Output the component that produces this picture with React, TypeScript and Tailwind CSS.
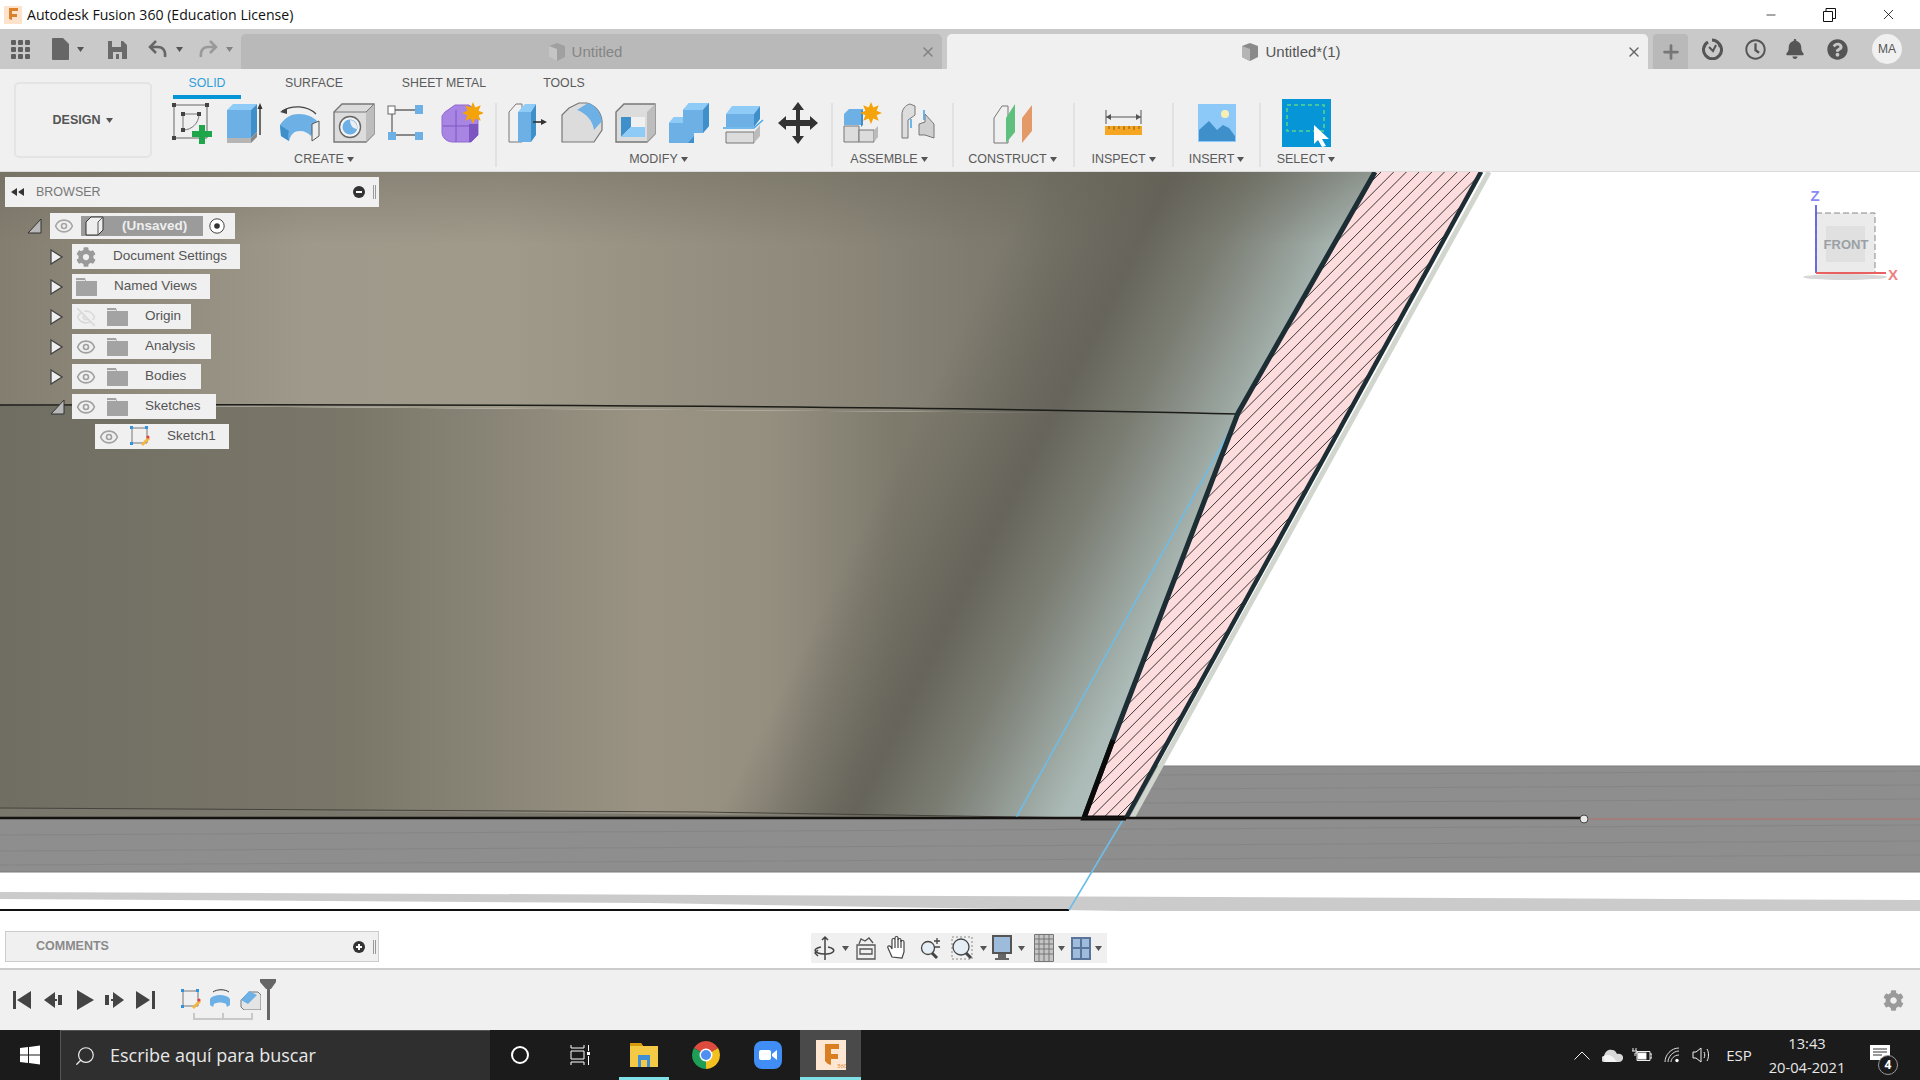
import { Eye, EyeOff, Minus, X, Plus, Search } from "lucide-react";
import { FaBell, FaCog, FaQuestionCircle, FaRegClock } from "react-icons/fa";

const B = "#6cb0e6";
const BD = "#3f8fcb";
const BL = "#8fcbf7";
const G = "#dcdcdc";
const GD = "#b5b5b5";
const L = "#777";

const Caret = ({ className = "" }: { className?: string }) => (
  <svg width="7" height="5" viewBox="0 0 7 5" className={className}>
    <path d="M0 0h7L3.5 5z" fill="#555" />
  </svg>
);

const Folder = () => (
  <svg width="21" height="18" viewBox="0 0 21 18">
    <path d="M0 0h9l1 3h11v15H0z" fill="#a3a3a3" />
    <path d="M0 2h9v1H0z" fill="#e6e6e6" />
  </svg>
);

const Burst = ({ x, y, r = 9 }: { x: number; y: number; r?: number }) => {
  const pts = Array.from({ length: 16 }, (_, i) => {
    const rad = i % 2 ? r * 0.55 : r;
    const a = (i * Math.PI) / 8;
    return `${x + rad * Math.cos(a)},${y + rad * Math.sin(a)}`;
  }).join(" ");
  return <polygon points={pts} fill="#f5a30a" />;
};

const Ico = ({ children, w = 42, h = 42 }: { children: React.ReactNode; w?: number; h?: number }) => (
  <svg width={w} height={h} viewBox={`0 0 ${w} ${h}`}>
    {children}
  </svg>
);

const SketchIco = () => (
  <Ico>
    <path d="M3 3h33v33H3z" fill="none" stroke="#666" />
    <path d="M12 12h16M12 12v16M28 12c0 9-7 16-16 16" fill="none" stroke="#777" />
    {[[1, 1], [34, 1], [1, 34], [10, 10], [26, 10], [10, 26]].map(([x, y]) => (
      <rect key={`${x}-${y}`} x={x} y={y} width="4" height="4" fill="#444" />
    ))}
    <path d="M28 23h6v6h7v6h-7v7h-6v-7h-7v-6h7z" fill="#1fa64a" />
  </Ico>
);

const ExtrudeIco = () => (
  <Ico>
    <path d="M2 36V8h24v28z" fill={B} />
    <path d="M2 8l6-6h24L26 8z" fill={BL} />
    <path d="M26 8l6-6v28l-6 6z" fill={BD} />
    <path d="M2 36h24v5H2z" fill={GD} />
    <path d="M26 36l6-6v5l-6 6z" fill="#888" />
    <path d="M35 33V4" stroke="#333" strokeWidth="1.4" />
    <path d="M32.5 7L35 1l2.5 6z" fill="#333" />
  </Ico>
);

const RevolveIco = () => (
  <Ico>
    <path d="M3 9C13 3 28 3 37 12" fill="none" stroke="#444" strokeWidth="1.3" />
    <path d="M1 10l7-4 0 6z" fill="#444" />
    <path d="M1 23C6 15 13 12 20 12c8 0 14 3 18 7l-6 15c-3-3-6-5-11-5-6 0-9 3-11 10l-8-5z" fill={B} />
    <path d="M1 23l9 6c-1 3-1 6 0 10l-8-5z" fill={BD} />
    <path d="M33 22l7-3v15l-7 5z" fill="#eee" stroke="#555" />
  </Ico>
);

const HoleIco = () => (
  <Ico>
    <path d="M1 10l8-8h32v30l-8 8H1z" fill={G} stroke={L} strokeWidth="1.4" />
    <path d="M33 40V10l8-8v30z" fill="#bdbdbd" />
    <path d="M1 10h32l8-8" fill="none" stroke={L} />
    <circle cx="17" cy="25" r="10.5" fill="#f3f3f3" stroke="#666" strokeWidth="1.4" />
    <circle cx="17" cy="25" r="7.5" fill={B} />
    <path d="M17 18a7.5 7.5 0 0 1 7 9c-4 0-7-4-7-9z" fill="#eee" />
  </Ico>
);

const PatternIco = () => (
  <Ico>
    <path d="M8 8h20M5 12v18M8 33h20" stroke="#666" strokeWidth="1.3" />
    <rect x="1" y="4" width="7" height="8" fill="#fff" stroke="#666" />
    <rect x="28" y="3" width="8" height="9" fill={B} />
    <rect x="1" y="30" width="8" height="8" fill={B} />
    <rect x="28" y="30" width="8" height="8" fill={B} />
  </Ico>
);

const FormIco = () => (
  <Ico>
    <path d="M4 10L14 3h14l9 8v22l-7 7H12C6 40 1 36 1 30V14z" fill="#a885e3" stroke="#8f68d2" />
    <path d="M28 22h9v11l-7 7h-2z" fill="#7d55c0" />
    <path d="M2 24h26M15 8v32" stroke="#7d55c0" />
    <Burst x={32} y={11} r={11} />
  </Ico>
);

const PressIco = () => (
  <Ico w={40}>
    <path d="M1 10l7-8h6v38H1z" fill="#f1f1f1" stroke={L} />
    <path d="M10 10h13v30H10z" fill={B} />
    <path d="M10 10l7-8h11l-5 8z" fill={BL} />
    <path d="M23 10l5-8v31l-5 7z" fill={BD} />
    <path d="M25 20h10" stroke="#333" strokeWidth="1.6" />
    <path d="M33 17l6 3-6 3z" fill="#333" />
  </Ico>
);

const FilletIco = () => (
  <Ico>
    <path d="M1 13l7-7 10-5h8c8 2 14 9 15 18v9l-8 12H1z" fill={G} stroke={L} strokeWidth="1.2" />
    <path d="M16 8l11-7c7 2 13 9 14 18l-8 9c-1-9-8-17-17-20z" fill={B} />
  </Ico>
);

const ShellIco = () => (
  <Ico>
    <path d="M1 10l8-8h31v30l-8 8H1z" fill={G} stroke={L} strokeWidth="1.4" />
    <path d="M32 40V10l8-8v30z" fill="#bdbdbd" />
    <path d="M6 15h24v20H6z" fill="#f0f0f0" />
    <path d="M6 15h10v10l-10 10z" fill={BD} />
    <path d="M6 35l10-10h14v10z" fill={BL} />
  </Ico>
);

const CombineIco = () => (
  <Ico>
    <path d="M14 8l6-7h20v23l-6 7H25v10H0V21l5-6h9z" fill={B} />
    <path d="M14 8l6-7h20l-6 7z" fill={BL} />
    <path d="M34 8l6-7v23l-6 7z" fill={BD} />
    <path d="M0 21l5-6h9v6z" fill={BL} />
    <path d="M25 31v10l-6-0l6-7z" fill={BD} />
  </Ico>
);

const SplitIco = () => (
  <Ico>
    <path d="M3 12h28v13H3z" fill={B} />
    <path d="M3 12l6-8h28l-6 8z" fill={BL} />
    <path d="M31 12l6-8v13l-6 8z" fill={BD} />
    <path d="M3 30h28v11H3z" fill={G} stroke={L} />
    <path d="M31 41V30l6-7v11z" fill="#bbb" />
    <path d="M0 26h31l9-8" fill="none" stroke="#4aa8ea" strokeWidth="1.6" />
  </Ico>
);

const MoveIco = () => (
  <Ico>
    <path d="M21 0l6 8h-4v10h10v-4l8 7-8 7v-4H23v10h4l-6 8-6-8h4V24H9v4l-8-7 8-7v4h10V8h-4z" fill="#333" />
  </Ico>
);

const NewCompIco = () => (
  <Ico>
    <path d="M1 12l5-5h14v16H1z" fill={B} />
    <path d="M20 7v16l-2 2V9z" fill={BD} />
    <path d="M1 24h15v16H1z" fill={G} stroke={L} />
    <path d="M16 28h15v12H16z" fill={G} stroke={L} />
    <path d="M31 40V28l4-4v11z" fill="#bbb" />
    <Burst x={28} y={11} r={11} />
  </Ico>
);

const JointIco = () => (
  <Ico w={36}>
    <path d="M2 36V12c0-4 3-9 8-10l5 2v9l-7 5v18z" fill="#ddd" stroke={L} />
    <path d="M19 22l6-2v-8l9 10v14l-9-3h-6z" fill="#cfcfcf" stroke={L} />
    <path d="M11 17v9M24 8v10" stroke="#4aa8ea" strokeWidth="1.6" />
  </Ico>
);

const PlaneIco = () => (
  <Ico w={44}>
    <path d="M2 16l8-12h6v37H2z" fill="#f0f0f0" stroke={L} />
    <path d="M14 16l9-14v28l-9 11z" fill="#5fbf7c" />
    <path d="M30 16l10-13v26l-10 12z" fill="#e39a68" />
  </Ico>
);

const MeasureIco = () => (
  <Ico w={40} h={28}>
    <path d="M2 1v14M37 1v14M2 8h35" stroke="#555" />
    <path d="M2 8l5-3v6zM37 8l-5-3v6z" fill="#555" />
    <path d="M1 17h37v9H1z" fill="#f5a623" />
    <path d="M5 17v3M10 17v4M15 17v3M20 17v4M25 17v3M30 17v4M35 17v3" stroke="#8a5c10" />
  </Ico>
);

const InsertIco = () => (
  <Ico w={38} h={38}>
    <path d="M0 0h38v38H0z" fill="#8cc9f8" />
    <circle cx="27" cy="10" r="4" fill="#f8efb5" />
    <path d="M1 37V26l10-9 8 9 6-5 6 3 6 8v5z" fill="#3f8fcb" />
  </Ico>
);

const SelectIco = () => (
  <Ico w={49} h={48}>
    <path d="M0 0h49v48H0z" fill="#0696d7" />
    <path d="M5 6h37v26H5z" fill="none" stroke="#5bd38a" strokeWidth="1.5" strokeDasharray="4 3" />
    <path d="M32 26l15 14-7 0 4 7-4 1-4-7-4 4z" fill="#fff" />
  </Ico>
);

function Tool({ children }: { children: React.ReactNode }) {
  return <div className="flex h-[42px] w-[54px] items-center justify-center">{children}</div>;
}

function Group({ label, className, labelClass = "", rowClass = "", children }: { label: string; className: string; labelClass?: string; rowClass?: string; children: React.ReactNode }) {
  return (
    <div className={`flex h-[69px] shrink-0 flex-col items-center ${className}`}>
      <div className={`flex h-[46px] items-start justify-center ${rowClass}`}>{children}</div>
      <div className={`mt-[4px] flex items-center gap-[3px] text-[12.5px] leading-[14px] text-[#5a5a5a] ${labelClass}`}>
        {label}
        <Caret />
      </div>
    </div>
  );
}

const Sep = () => <div className="mx-[4px] mt-[1px] h-[64px] w-[2px] shrink-0 bg-[#e2e2e2]" />;

function WinControls() {
  return (
    <div className="ml-auto flex items-center text-black">
      <div className="flex w-[58px] justify-center">
        <Minus size={14} strokeWidth={1.2} />
      </div>
      <div className="flex w-[59px] justify-center">
        <svg width="13" height="14" viewBox="0 0 13 14" fill="none" stroke="#111">
          <path d="M.5 3.5h9v10h-9zM3 3.5V.5h9.500v10H9.500" />
        </svg>
      </div>
      <div className="flex w-[61px] justify-center pr-[3px]">
        <X size={17} strokeWidth={1.1} />
      </div>
    </div>
  );
}

function DocTab({ label, active }: { label: string; active?: boolean }) {
  return (
    <div className={`flex h-[35px] w-[701px] shrink-0 items-center rounded-t-[5px] ${active ? "bg-[#f0f0f0] text-[#555]" : "bg-[#b9b9b9] text-[#858585]"}`}>
      <div className="flex flex-1 items-center justify-center gap-[5px] pl-[8px] pt-[1px] text-[15px]">
        <svg width="20" height="20" viewBox="0 0 20 20">
          <path d="M2 4l8-3 8 3v11l-8 4-8-4z" fill={active ? "#8a8a8a" : "#a0a0a0"} />
          <path d="M2 4l8 3v12l-8-4z" fill={active ? "#b5b5b5" : "#c5c5c5"} />
        </svg>
        {label}
      </div>
      <X size={16} strokeWidth={2} className={`mr-[6px] w-[16px] ${active ? "text-[#666]" : "text-[#808080]"}`} />
    </div>
  );
}

function TabBar() {
  return (
    <div className="flex h-[40px] shrink-0 items-end bg-[#c9c9c9]">
      <div className="flex h-[40px] w-[241px] shrink-0 items-center text-[#666]">
        <svg width="19" height="19" viewBox="0 0 19 19" className="ml-[11px]" fill="#5f5f5f">
          {[0, 7, 14].flatMap((y) => [0, 7, 14].map((x) => <rect key={`${x}${y}`} x={x} y={y} width="5" height="5" rx="1" />))}
        </svg>
        <svg width="17" height="22" viewBox="0 0 17 22" className="ml-[22px]" fill="#666">
          <path d="M0 1a1 1 0 0 1 1-1h10l6 6v15a1 1 0 0 1-1 1H1a1 1 0 0 1-1-1z" />
        </svg>
        <Caret className="ml-[8px]" />
        <svg width="19" height="19" viewBox="0 0 19 19" className="ml-[24px]">
          <path d="M0 1h15l4 4v14H0z" fill="#6a6a6a" />
          <path d="M4 1h9v6H4zM5 12h9v7H5z" fill="#c9c9c9" />
          <path d="M8 14h3v5H8z" fill="#6a6a6a" />
        </svg>
        <svg width="20" height="20" viewBox="0 0 20 20" className="ml-[21px]" fill="none" stroke="#666" strokeWidth="2.5">
          <path d="M17 18c1-6-2-10-7-10H3M8 2L2 8l6 6" />
        </svg>
        <Caret className="ml-[8px]" />
        <svg width="20" height="20" viewBox="0 0 20 20" className="ml-[15px]" fill="none" stroke="#999" strokeWidth="2.5">
          <path d="M3 18c-1-6 2-10 7-10h7M12 2l6 6-6 6" />
        </svg>
        <Caret className="ml-[8px] opacity-60" />
      </div>
      <DocTab label="Untitled" />
      <div className="w-[5px] shrink-0" />
      <DocTab label="Untitled*(1)" active />
      <div className="ml-[5px] flex h-[35px] w-[35px] shrink-0 items-center justify-center rounded-t-[4px] bg-[#b9b9b9]">
        <Plus size={22} strokeWidth={3} className="text-[#777]" />
      </div>
      <div className="flex h-[40px] flex-1 items-center text-[#555]">
        <div className="flex w-[48px] justify-center">
          <svg width="22" height="22" viewBox="0 0 22 22" fill="none" stroke="#555" strokeWidth="3">
            <path d="M7 4a9 9 0 1 0 9 0M11 2c4 0 8 3 8 7" />
            <path d="M8 9l4 4 3-6" strokeWidth="2" />
          </svg>
        </div>
        <div className="flex w-[38px] justify-center">
          <FaRegClock size={21} />
        </div>
        <div className="flex w-[42px] justify-center">
          <FaBell size={20} />
        </div>
        <div className="flex w-[42px] justify-center">
          <FaQuestionCircle size={21} />
        </div>
        <div className="ml-[14px] flex h-[30px] w-[30px] items-center justify-center rounded-full bg-[#f0f0f0] text-[12px]">MA</div>
      </div>
    </div>
  );
}

function Toolbar() {
  return (
    <div className="flex h-[103px] shrink-0 border-b border-[#dcdcdc] bg-[#f0f0f0]">
      <div className="ml-[14px] mt-[13px] flex h-[76px] w-[138px] shrink-0 items-center justify-center gap-[6px] rounded-[5px] border-2 border-[#e4e4e4] text-[12.5px] font-bold text-[#555]">
        DESIGN
        <Caret />
      </div>
      <div className="ml-[13px] flex flex-col">
        <div className="flex h-[30px] items-start text-[12.3px] leading-[14px] text-[#5a5a5a]">
          <div className="ml-[8px] h-[30px] w-[68px] border-b-[4px] border-[#0696d7] pt-[7px] text-center text-[#2f9fdc]">SOLID</div>
          <div className="ml-[38px] w-[70px] pt-[7px] text-center">SURFACE</div>
          <div className="ml-[47px] w-[96px] pt-[7px] text-center">SHEET METAL</div>
          <div className="ml-[47px] w-[50px] pt-[7px] text-center">TOOLS</div>
        </div>
        <div className="flex pt-[3px]">
          <Group label="CREATE" className="w-[326px]" labelClass="mr-[8px]" rowClass="self-start">
            <Tool><SketchIco /></Tool>
            <Tool><ExtrudeIco /></Tool>
            <Tool><RevolveIco /></Tool>
            <Tool><HoleIco /></Tool>
            <Tool><PatternIco /></Tool>
            <Tool><FormIco /></Tool>
          </Group>
          <Sep />
          <Group label="MODIFY" className="w-[326px]" labelClass="mr-[11px]" rowClass="self-start">
            <Tool><PressIco /></Tool>
            <Tool><FilletIco /></Tool>
            <Tool><ShellIco /></Tool>
            <Tool><CombineIco /></Tool>
            <Tool><SplitIco /></Tool>
            <Tool><MoveIco /></Tool>
          </Group>
          <Sep />
          <Group label="ASSEMBLE" className="w-[111px]" labelClass="mr-[7px]" rowClass="self-start">
            <Tool><NewCompIco /></Tool>
            <Tool><JointIco /></Tool>
          </Group>
          <Sep />
          <Group label="CONSTRUCT" className="w-[111px]" labelClass="mr-[2px]">
            <Tool><PlaneIco /></Tool>
          </Group>
          <Sep />
          <Group label="INSPECT" className="w-[89px]">
            <Tool><MeasureIco /></Tool>
          </Group>
          <Sep />
          <Group label="INSERT" className="w-[77px]">
            <Tool><InsertIco /></Tool>
          </Group>
          <Sep />
          <Group label="SELECT" className="w-[82px]">
            <Tool><SelectIco /></Tool>
          </Group>
        </div>
      </div>
    </div>
  );
}

const bodyEdge = "1375,172 1238,413 1113,740 1084,818";
const sectionPts = "1375,172 1483,172 1126,818 1084,818 1113,740 1238,413";

function Scene() {
  const hatch = Array.from({ length: 130 }, (_, i) => 1000 + i * 12.7);
  const stripes = [776, 790, 804, 830, 846, 860];
  return (
    <svg className="absolute inset-0 h-full w-full" viewBox="0 172 1920 796" preserveAspectRatio="none">
      <defs>
        <linearGradient id="top" gradientUnits="userSpaceOnUse" x1="0" y1="0" x2="1400" y2="0">
          <stop offset="0" stopColor="#837e70" />
          <stop offset="0.22" stopColor="#9f998b" />
          <stop offset="0.36" stopColor="#a09a8b" />
          <stop offset="0.58" stopColor="#8e897a" />
          <stop offset="0.75" stopColor="#78756a" />
          <stop offset="1" stopColor="#78756a" />
        </linearGradient>
        <linearGradient id="low" gradientUnits="userSpaceOnUse" x1="0" y1="0" x2="1400" y2="0">
          <stop offset="0" stopColor="#706d63" />
          <stop offset="0.25" stopColor="#7a7769" />
          <stop offset="0.39" stopColor="#8f8a7b" />
          <stop offset="0.46" stopColor="#9a9384" />
          <stop offset="0.55" stopColor="#958f80" />
          <stop offset="0.64" stopColor="#7d7a6c" />
          <stop offset="1" stopColor="#7d7a6c" />
        </linearGradient>
        <linearGradient id="side" gradientUnits="userSpaceOnUse" x1="1000" y1="0" x2="1400" y2="200">
          <stop offset="0.25" stopColor="#66645b" stopOpacity="0" />
          <stop offset="0.52" stopColor="#66645b" />
          <stop offset="0.68" stopColor="#7a7c72" />
          <stop offset="0.8" stopColor="#8f9790" />
          <stop offset="0.94" stopColor="#abbab6" />
          <stop offset="1" stopColor="#afbfbc" />
        </linearGradient>
        <linearGradient id="fade" x1="0" y1="0" x2="0" y2="1">
          <stop offset="0" stopColor="#5f5c50" stopOpacity="0.35" />
          <stop offset="0.3" stopColor="#5f5c50" stopOpacity="0" />
        </linearGradient>
        <clipPath id="sec">
          <polygon points={sectionPts} />
        </clipPath>
      </defs>

      <rect x="0" y="172" width="1920" height="796" fill="#fff" />
      <polygon points="1100,766 1920,766 1920,872 0,872 0,800" fill="#8e8e8e" />
      {stripes.map((y) => (
        <path key={y} d={`M0 ${y + 5}L1920 ${y - 5}`} stroke="#7f7f7f" strokeWidth="1" opacity="0.55" />
      ))}
      <path d="M1110 766H1920M0 872H1920" stroke="#7a7a7a" />

      <polygon points="0,892 1920,900 1920,911 1125,911 650,903 0,899" fill="#cbcbcb" />
      <path d="M0 910H1069" stroke="#111" strokeWidth="2" />

      <polygon points="0,172 1375,172 1238,413 1238,414 0,405" fill="url(#top)" />
      <polygon points="0,405 1238,414 1113,740 1084,818 0,808" fill="url(#low)" />
      <polygon points={`0,172 ${bodyEdge} 0,808`} fill="url(#side)" />
      <polygon points="0,172 1375,172 1238,413 0,405" fill="url(#fade)" />
      <polygon points="0,808 1084,818 0,818" fill="#7a776d" />
      <path d="M0 808L700 812L1084 818" fill="none" stroke="#45443e" />
      <path d="M0 405C400 404 900 406 1238 414" fill="none" stroke="#1c1c18" strokeWidth="1.5" />

      <path d="M1489 172L1132 818" stroke="#d0d5cd" strokeWidth="5" />
      <polygon points={sectionPts} fill="#fddcde" />
      <g clipPath="url(#sec)">
        {hatch.map((x) => (
          <path key={x} d={`M${x} 172L${x - 660} 832`} stroke="#222" strokeWidth="0.9" />
        ))}
      </g>
      <path d="M1238 416L1016 818M1124 818L1069 910" stroke="#6dbde8" strokeWidth="1.6" fill="none" />
      <polyline points={bodyEdge} fill="none" stroke="#1d2d34" strokeWidth="5" />
      <path d="M1113 740L1084 818L1126 818" fill="none" stroke="#0a0a0a" strokeWidth="5" />
      <path d="M1481 172L1126 818" stroke="#1d2d34" strokeWidth="4.5" />
      <path d="M0 818H1584" stroke="#151210" strokeWidth="2.5" />
      <path d="M1590 819H1920" stroke="#c2685f" strokeWidth="0.8" />
      <circle cx="1584" cy="819" r="4" fill="#e8e8e8" stroke="#444" />

      <ellipse cx="1845" cy="277" rx="42" ry="3" fill="#d8d8d8" />
      <rect x="1816" y="213" width="59" height="60" fill="#ebebeb" stroke="#888" strokeDasharray="6 3" />
      <rect x="1826" y="226" width="39" height="36" fill="#e0e0e0" />
      <path d="M1816 205V273" stroke="#6060e0" strokeWidth="1.8" />
      <path d="M1816 273H1886" stroke="#e86060" strokeWidth="1.8" />
      <text x="1846" y="249" textAnchor="middle" fontSize="13" fontWeight="bold" fill="#9aa0a5">FRONT</text>
      <text x="1815" y="201" textAnchor="middle" fontSize="15" fontWeight="bold" fill="#8a8af0">Z</text>
      <text x="1893" y="280" textAnchor="middle" fontSize="15" fontWeight="bold" fill="#f08080">X</text>
    </svg>
  );
}

const Arrow = ({ open }: { open?: boolean }) =>
  open ? (
    <svg width="15" height="16" viewBox="0 0 15 16">
      <path d="M14 1v14H1z" fill="#b8b8b8" stroke="#333" />
    </svg>
  ) : (
    <svg width="13" height="16" viewBox="0 0 13 16">
      <path d="M1 1l11 7-11 7z" fill="#efefef" stroke="#444" strokeWidth="1.3" />
    </svg>
  );

const treeRows = [
  { label: "Document Settings", width: "w-[168px]", kind: "gear" },
  { label: "Named Views", width: "w-[138px]", kind: "folder" },
  { label: "Origin", width: "w-[119px]", kind: "hidden" },
  { label: "Analysis", width: "w-[139px]", kind: "shown" },
  { label: "Bodies", width: "w-[129px]", kind: "shown" },
  { label: "Sketches", width: "w-[144px]", kind: "shown", open: true },
];

function SketchMini() {
  return (
    <svg width="20" height="21" viewBox="0 0 20 21">
      <path d="M2 2h15v15H2z" fill="none" stroke="#777" />
      <path d="M0 0h3v3H0zM15 0h3v3h-3zM0 16h3v3H0z" fill="#2f93e0" />
      <path d="M11 18l7-7 2 2-7 7z" fill="#f3b63f" />
      <circle cx="18" cy="11" r="1.600" fill="#e34040" />
    </svg>
  );
}

function Browser() {
  return (
    <div className="absolute left-[5px] top-[5px] flex w-[374px] flex-col text-[13.5px] text-[#555]">
      <div className="flex h-[30px] items-center bg-[#f0f0f0] text-[12.500px] text-[#777]">
        <svg width="13" height="8" viewBox="0 0 13 8" className="ml-[6px]" fill="#333">
          <path d="M6 0v8L0 4zM13 0v8L7 4z" />
        </svg>
        <span className="ml-[12px]">BROWSER</span>
        <svg width="12" height="12" viewBox="0 0 12 12" className="ml-auto">
          <circle cx="6" cy="6" r="6" fill="#333" />
          <path d="M3 5h6v2H3z" fill="#fff" />
        </svg>
        <div className="ml-[8px] mr-[3px] h-[14px] w-[3px] border-x border-[#999]" />
      </div>
      <div className="ml-[22px] mt-[6px] flex items-center">
        <div className="w-[23px]"><Arrow open /></div>
        <div className="flex h-[26px] w-[185px] items-center bg-[#f0f0f0]">
          <Eye size={20} className="ml-[4px] text-[#a6a6a6]" />
          <div className="ml-[7px] flex h-[20px] w-[122px] items-center bg-[#9b9b9b] font-bold text-[#eee]">
            <svg width="20" height="20" viewBox="0 0 20 20" className="ml-[4px]">
              <path d="M1 6l5-5h12v13l-5 5H1z" fill="#eee" stroke="#333" />
              <path d="M13 19V6l5-5" fill="none" stroke="#555" />
            </svg>
            <span className="ml-[17px]">(Unsaved)</span>
          </div>
          <svg width="16" height="16" viewBox="0 0 16 16" className="ml-[6px]">
            <circle cx="8" cy="8" r="7.200" fill="#fff" stroke="#444" />
            <circle cx="8" cy="8" r="2.800" fill="#333" />
          </svg>
        </div>
      </div>
      {treeRows.map((row) => (
        <div key={row.label} className="ml-[45px] mt-[5px] flex items-center">
          <div className="flex w-[22px]"><Arrow open={row.open} /></div>
          <div className={`flex h-[25px] items-center bg-[#f0f0f0] ${row.width}`}>
            {row.kind === "gear" && <FaCog size={20} className="ml-[4px] text-[#9a9a9a]" />}
            {row.kind === "folder" && <div className="ml-[4px] flex"><Folder /></div>}
            {row.kind === "hidden" && <EyeOff size={20} className="ml-[4px] text-[#dadada]" />}
            {row.kind === "shown" && <Eye size={20} className="ml-[4px] text-[#a0a0a0]" />}
            {(row.kind === "hidden" || row.kind === "shown") && (
              <div className="ml-[11px] flex"><Folder /></div>
            )}
            <span className="ml-[17px]">{row.label}</span>
          </div>
        </div>
      ))}
      <div className="ml-[90px] mt-[5px] flex h-[25px] w-[134px] items-center bg-[#f0f0f0]">
        <Eye size={20} className="ml-[4px] text-[#a0a0a0]" />
        <div className="ml-[11px] flex"><SketchMini /></div>
        <span className="ml-[17px]">Sketch1</span>
      </div>
    </div>
  );
}

function Comments() {
  return (
    <div className="absolute bottom-[6px] left-[5px] flex h-[31px] w-[374px] items-center border border-[#ccc] bg-[#f0f0f0] text-[12.500px] font-bold text-[#8a8a8a]">
      <span className="ml-[30px]">COMMENTS</span>
      <svg width="12" height="12" viewBox="0 0 12 12" className="ml-auto">
        <circle cx="6" cy="6" r="6" fill="#333" />
        <path d="M5 3h2v2h2v2H7v2H5V7H3V5h2z" fill="#fff" />
      </svg>
      <div className="ml-[8px] mr-[2px] h-[14px] w-[3px] border-x border-[#999]" />
    </div>
  );
}

function NavBar() {
  return (
    <div className="absolute bottom-[5px] left-[811px] flex h-[30px] w-[296px] items-center bg-[#f0f0f0]">
      <div className="flex w-[28px] justify-center">
        <svg width="22" height="26" viewBox="0 0 22 26" fill="none" stroke="#444" strokeWidth="1.500">
          <path d="M11 2v23M8 5l3-3 3 3" />
          <path d="M14 12c5 1 7 3 5 5s-10 3-15 1-3-5 3-6M4 15l-3 3 3 3" />
        </svg>
      </div>
      <div className="flex w-[12px] justify-center"><Caret /></div>
      <div className="flex w-[30px] justify-center">
        <svg width="20" height="24" viewBox="0 0 20 24" fill="none" stroke="#555" strokeWidth="1.300">
          <path d="M1 9h18v14H1zM4 13h12v5H4z" />
          <path d="M3 8l2-5 4 2 4-3 4 5" />
        </svg>
      </div>
      <div className="flex w-[33px] justify-center">
        <svg width="22" height="26" viewBox="0 0 22 26" fill="#fff" stroke="#444" strokeWidth="1.200">
          <path d="M5 22L1 13c-1-2 1-3 3-1l1 2V5c0-2 3-2 3 0V3c0-2 3-2 3 0v2c0-2 3-2 3 0v2c0-2 3-2 3 0v10l-2 6z" />
          <path d="M8 5v8M11 4v9M14 5v8" />
        </svg>
      </div>
      <div className="flex w-[33px] justify-center">
        <svg width="22" height="24" viewBox="0 0 22 24" fill="none" stroke="#444" strokeWidth="1.300">
          <circle cx="8" cy="12" r="6.500" fill="#e4eef4" />
          <path d="M12 17l5 5" strokeWidth="3" />
          <path d="M17 2v6M14 5h6M14 11h6" />
        </svg>
      </div>
      <div className="flex w-[30px] justify-center">
        <svg width="24" height="26" viewBox="0 0 24 26" fill="none" stroke="#444">
          <path d="M2 2h20v22H2z" strokeDasharray="2 2" stroke="#888" />
          <circle cx="11" cy="12" r="8" fill="#e4eef4" strokeWidth="1.300" />
          <path d="M16 18l5 5" strokeWidth="3" />
        </svg>
      </div>
      <div className="flex w-[12px] justify-center"><Caret /></div>
      <div className="flex w-[26px] justify-center">
        <svg width="20" height="26" viewBox="0 0 20 26">
          <path d="M0 0h20v19H0z" fill="#555" />
          <path d="M2 2h16v15H2z" fill="#9dbcdc" />
          <path d="M6 19h8v4h3v2H3v-2h3z" fill="#666" />
        </svg>
      </div>
      <div className="flex w-[12px] justify-center"><Caret /></div>
      <div className="ml-[4px] flex w-[26px] justify-center">
        <svg width="20" height="28" viewBox="0 0 20 28" stroke="#777" fill="#c4c4c4">
          <path d="M.5.500h19v27H.5z" />
          <path d="M5 0v28M10 0v28M15 0v28M0 5h20M0 10h20M0 15h20M0 20h20" fill="none" />
        </svg>
      </div>
      <div className="flex w-[8px] justify-center"><Caret /></div>
      <div className="ml-[3px] flex w-[26px] justify-center">
        <svg width="20" height="23" viewBox="0 0 20 23">
          <path d="M0 0h20v23H0z" fill="#5a749a" />
          <path d="M2 2h7v8H2zM11 2h7v8h-7zM2 12h7v9H2zM11 12h7v9h-7z" fill="#a0bcdc" />
        </svg>
      </div>
      <div className="flex w-[8px] justify-center"><Caret /></div>
    </div>
  );
}

function Timeline() {
  return (
    <div className="flex h-[62px] shrink-0 items-center border-t-2 border-[#ccc] bg-[#f0f0f0] pl-[6px]">
      {[
        "M3 2h3v18H3zM21 2v18L7 11z",
        "M3 11l11-8v7h2v2h-2v7zM17 6h4v10h-4z",
        "M5 1l17 10L5 21z",
        "M21 11L10 3v7H8v2h2v7zM2 6h4v10H2z",
        "M18 2h3v18h-3zM2 2v18l14-9z",
      ].map((d) => (
        <div key={d} className="flex w-[31px] justify-center">
          <svg width="24" height="22" viewBox="0 0 24 22"><path d={d} fill="#444" /></svg>
        </div>
      ))}
      <div className="relative ml-[20px] flex h-[40px] w-[90px] items-start gap-[9px] pt-[9px]">
        <SketchMini />
        <svg width="21" height="20" viewBox="0 0 21 20">
          <path d="M3 3C7 0 15 0 19 3" fill="none" stroke="#333" />
          <path d="M0 10c2-3 6-4 10-4s8 1 10 4v6l-3 2-1-3c-3-2-9-2-12 0l-1 3-3-2z" fill={B} />
        </svg>
        <svg width="21" height="21" viewBox="0 0 21 21">
          <path d="M1 11L9 3h9l3 3v15H4l-3-3z" fill="#e4e4e4" stroke="#777" />
          <path d="M1 11L9 2l8 4-9 9z" fill={B} />
        </svg>
        <div className="absolute bottom-[0px] left-[12px] h-[7px] w-[60px] border-x-2 border-b-2 border-[#c8c8c8]" />
        <div className="absolute bottom-[0px] left-[41px] h-[7px] w-[2px] bg-[#c8c8c8]" />
        <svg width="16" height="41" viewBox="0 0 16 41" className="absolute left-[79px] top-[-1px]">
          <path d="M0 0h16v3l-5 7h-1v31H7V10H6L0 3z" fill="#666" />
        </svg>
      </div>
      <FaCog size={21} className="ml-auto mr-[16px] text-[#9a9a9a]" />
    </div>
  );
}

function Taskbar() {
  return (
    <div className="flex h-[50px] shrink-0 items-stretch bg-[#1b1b1b] font-['Open_Sans',sans-serif] text-[#e8e8e8]">
      <div className="flex w-[60px] items-center justify-center">
        <svg width="20" height="20" viewBox="0 0 20 20" fill="#fff">
          <path d="M0 3l8-1v7.500H0zM9 1.900L20 .5v9H9zM0 10.500h8V18l-8-1zM9 10.500h11v9L9 18.100z" />
        </svg>
      </div>
      <div className="flex w-[430px] items-center border-l border-t border-[#555] bg-[#2f2f2f]">
        <Search size={22} strokeWidth={1.3} className="ml-[13px] -scale-x-100 text-[#eee]" />
        <span className="ml-[14px] text-[18px]">Escribe aquí para buscar</span>
      </div>
      <div className="flex w-[60px] items-center justify-center">
        <div className="h-[18px] w-[18px] rounded-full border-[2.500px] border-white" />
      </div>
      <div className="flex w-[60px] items-center justify-center">
        <svg width="20" height="20" viewBox="0 0 20 20" fill="none" stroke="#fff">
          <path d="M1 0v3h13V0M1 6h13v8H1zM1 20v-3h13v3M18.500 0v6M18.500 11v9" />
          <rect x="17" y="7" width="3" height="3" fill="#fff" stroke="none" />
        </svg>
      </div>
      <div className="ml-[4px] flex w-[60px] flex-col items-center justify-end">
        <svg width="28" height="24" viewBox="0 0 28 24" className="mb-[10px]">
          <path d="M0 0h11l2 3h15v21H0z" fill="#f4c945" />
          <path d="M0 0h11l2 3H0z" fill="#d99a0c" />
          <path d="M8 12h12v12h-3v-7h-6v7H8z" fill="#3e8fd8" />
        </svg>
        <div className="h-[3px] w-[50px] bg-[#7fe0e6]" />
      </div>
      <div className="ml-[1px] flex w-[62px] items-center justify-center">
        <svg width="28" height="28" viewBox="0 0 28 28">
          <path d="M14 14L1.900 7A14 14 0 0 1 26.100 7z" fill="#dd4b3e" />
          <path d="M14 14L26.100 7A14 14 0 0 1 14 28z" fill="#f3c11f" />
          <path d="M14 14L14 28A14 14 0 0 1 1.900 7z" fill="#1e9e57" />
          <circle cx="14" cy="14" r="6.500" fill="#fff" />
          <circle cx="14" cy="14" r="5" fill="#4f8ff0" />
        </svg>
      </div>
      <div className="flex w-[62px] items-center justify-center">
        <svg width="28" height="28" viewBox="0 0 28 28">
          <rect width="28" height="28" rx="8" fill="#3f8df5" />
          <rect x="5" y="9" width="12" height="10" rx="2" fill="#fff" />
          <path d="M18 13l5-4v10l-5-4z" fill="#fff" />
        </svg>
      </div>
      <div className="ml-[1px] flex w-[61px] flex-col items-center justify-end bg-[#4a4a4a]">
        <svg width="30" height="30" viewBox="0 0 30 30" className="mb-[7px]">
          <rect width="30" height="30" fill="#fde6d2" />
          <path d="M9 4h14v5H15v5h7v5h-7v6l-3-1-3-3z" fill="#d97f22" />
          <text x="21" y="28" fontSize="6" fill="#d97f22">360</text>
        </svg>
        <div className="h-[3px] w-full bg-[#7fe0e6]" />
      </div>
      <div className="ml-auto flex items-center">
        <div className="flex w-[30px] justify-center">
          <svg width="16" height="9" viewBox="0 0 16 9" fill="none" stroke="#eee"><path d="M.5 8.500L8 1l7.500 7.500" /></svg>
        </div>
        <div className="flex w-[30px] justify-center">
          <svg width="21" height="13" viewBox="0 0 21 13"><path d="M3 13a3 3 0 0 1-1-6c1-4 4-7 8-6 3 0 4 2 5 4 4-1 7 2 6 5-1 2-2 3-4 3z" fill="#d8d8d8" /><path d="M1 8c3-3 7-2 10 0l4 5H3z" fill="#f4f4f4" /></svg>
        </div>
        <div className="flex w-[30px] justify-center">
          <svg width="20" height="14" viewBox="0 0 20 14" fill="none" stroke="#eee"><path d="M5 3.500h13v9H5zM18 6h2v4h-2" /><rect x="6" y="5" width="8" height="6" fill="#fff" /><path d="M1 0v3M4 0v3M0 3h5v2H3v3" /></svg>
        </div>
        <div className="flex w-[30px] justify-center">
          <svg width="16" height="16" viewBox="0 0 16 16" fill="none" stroke="#ddd"><path d="M1 15C1 8 7 1 15 1M4 15C4 10 9 4 15 4M7 15c0-3 3-7 8-7" /><circle cx="13" cy="13.500" r="1.700" fill="#fff" stroke="none" /></svg>
        </div>
        <div className="flex w-[30px] justify-center">
          <svg width="20" height="16" viewBox="0 0 20 16" fill="none" stroke="#eee"><path d="M1 5h3l5-4v14l-5-4H1zM12 5c1 2 1 4 0 6M15 2c2 3 2 9 0 12" /></svg>
        </div>
        <div className="w-[44px] text-center text-[15px]">ESP</div>
        <div className="flex w-[92px] flex-col items-center text-[14.700px] leading-[24px]">
          <span>13:43</span>
          <span>20-04-2021</span>
        </div>
        <div className="relative h-[50px] w-[67px]">
          <svg width="20" height="18" viewBox="0 0 20 18" className="absolute left-[17px] top-[15px]">
            <path d="M0 0h20v15H0z" fill="#fff" />
            <path d="M3 4h14M3 7h14M3 10h9" stroke="#333" />
          </svg>
          <div className="absolute left-[25px] top-[25px] flex h-[20px] w-[20px] items-center justify-center rounded-full border border-[#999] bg-[#1b1b1b] text-[12px] font-bold text-white">4</div>
        </div>
      </div>
    </div>
  );
}

export default function App() {
  return (
    <div className="flex h-screen w-screen flex-col overflow-hidden bg-white font-['Liberation_Sans',sans-serif]">
      <div className="flex h-[29px] shrink-0 items-center bg-white">
        <svg width="18" height="18" viewBox="0 0 18 18" className="ml-[4px]">
          <rect width="18" height="18" fill="#fde3cc" />
          <path d="M5 2h9v3H8v3h5v3H8v3l-3-1z" fill="#d9822b" />
        </svg>
        <span className="ml-[5px] font-['Open_Sans',sans-serif] text-[14.100px] text-[#111]">Autodesk Fusion 360 (Education License)</span>
        <WinControls />
      </div>
      <TabBar />
      <Toolbar />
      <div className="relative flex-1 overflow-hidden">
        <Scene />
        <Browser />
        <Comments />
        <NavBar />
      </div>
      <Timeline />
      <Taskbar />
    </div>
  );
}
